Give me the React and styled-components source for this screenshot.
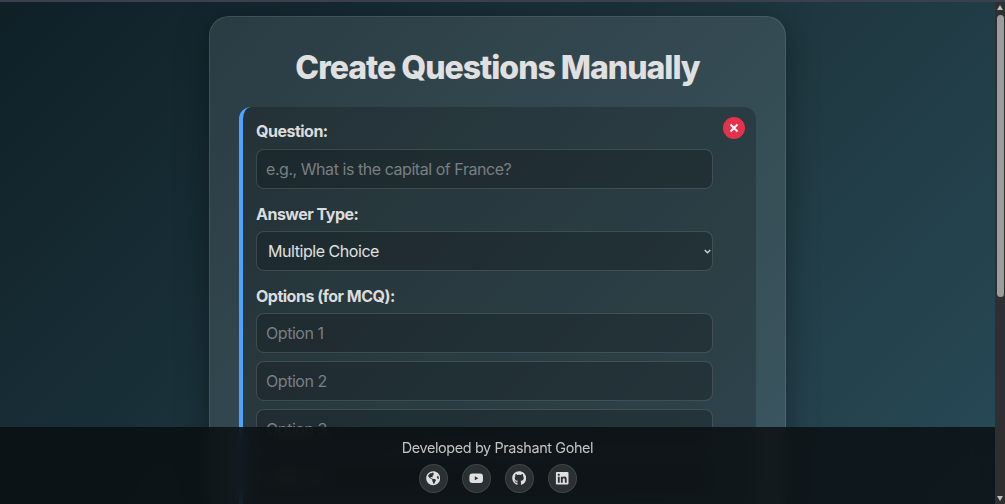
import React from "react";
import styled, { createGlobalStyle } from "styled-components";
import { FaGlobeAmericas, FaYoutube, FaGithub, FaLinkedin } from "react-icons/fa";

const GlobalStyle = createGlobalStyle`
  html, body {
    margin: 0;
    height: 100%;
    overflow: hidden;
    background: #0f2027;
  }
  * {
    box-sizing: border-box;
  }
`;

const font = `Inter, "Open Sans", sans-serif`;

const TopEdge = styled.div`
  height: 2px;
  background: #3b3f4e;
`;

const Shell = styled.div`
  display: flex;
  height: calc(100vh - 2px);
`;

const Viewport = styled.div`
  position: relative;
  flex: 1;
  overflow: hidden;
  font-family: ${font};
`;

// the browser hides real scrollbars here, so the rail is drawn
const Rail = styled.div`
  width: 10px;
  display: flex;
  flex-direction: column;
  align-items: center;
  padding: 3px 0 3px;
  background: #2f2f31;
`;

const ArrowUp = styled.div`
  width: 0;
  height: 0;
  border-left: 3.5px solid transparent;
  border-right: 3.5px solid transparent;
  border-bottom: 5px solid #bdbdbd;
`;

const ArrowDown = styled(ArrowUp)`
  margin-top: auto;
  border-bottom: none;
  border-top: 5px solid #bdbdbd;
`;

const Thumb = styled.div`
  width: 7px;
  height: 282px;
  margin-top: 5px;
  border-radius: 4px;
  background: #9c9c9c;
`;

const Page = styled.div`
  height: 848px;
  padding-top: 14px;
  background: linear-gradient(135deg, #0f2027, #203a43, #2c5364);
`;

const Panel = styled.main`
  width: 577px;
  height: 820px;
  margin: 0 auto;
  padding: 30px 29px;
  border-radius: 20px;
  border: 1px solid rgba(255, 255, 255, 0.1);
  background: rgba(255, 255, 255, 0.1);
  box-shadow: 0 8px 32px rgba(0, 0, 0, 0.37);
`;

const Title = styled.h1`
  margin: 0 0 18px;
  font-size: 32px;
  line-height: 42px;
  font-weight: 800;
  letter-spacing: -1px;
  text-align: center;
  color: #e0e0e0;
`;

const QuestionCard = styled.section`
  position: relative;
  padding: 14px 43px 14px 13px;
  border-left: 4px solid #4da3ff;
  border-radius: 12px;
  background: rgba(0, 0, 0, 0.2);
`;

const CloseButton = styled.button`
  position: absolute;
  top: 10px;
  right: 11px;
  width: 22px;
  height: 22px;
  padding: 0;
  display: flex;
  align-items: center;
  justify-content: center;
  border: none;
  border-radius: 50%;
  background: #e3324d;
  svg {
    display: block;
  }
`;

const Label = styled.label`
  display: block;
  margin-bottom: 7px;
  font-size: 16px;
  line-height: 21px;
  font-weight: 700;
  letter-spacing: -0.5px;
  color: #dcdcdc;
`;

const Field = styled.div`
  margin-bottom: 14px;
  & + & ${Label} {
    padding-top: 1px;
    margin-bottom: 6px;
  }
`;

const TextInput = styled.input`
  display: block;
  width: 100%;
  height: 40px;
  margin-bottom: ${(p) => p.$gap || 0}px;
  padding: 0 9px;
  font-family: ${font};
  font-size: 16px;
  letter-spacing: -0.45px;
  color: #e0e0e0;
  border: 1px solid rgba(255, 255, 255, 0.14);
  border-radius: 8px;
  background: rgba(0, 0, 0, 0.2);
  &::placeholder {
    color: #787f82;
    opacity: 1;
  }
`;

const SelectWrap = styled.div`
  position: relative;
`;

const Select = styled.select`
  display: block;
  width: 100%;
  height: 40px;
  padding: 0 11px;
  appearance: none;
  font-family: ${font};
  font-size: 16px;
  letter-spacing: -0.45px;
  color: #e0e0e0;
  border: 1px solid rgba(255, 255, 255, 0.14);
  border-radius: 8px;
  background: rgba(0, 0, 0, 0.2);
`;

const Chevron = styled.svg`
  position: absolute;
  top: 18px;
  right: 2px;
  pointer-events: none;
`;

const Footer = styled.footer`
  position: absolute;
  left: 0;
  right: 0;
  bottom: 0;
  height: 77px;
  padding-top: 11px;
  background: rgba(10, 14, 16, 0.82);
  backdrop-filter: blur(8px);
  text-align: center;
`;

const Credit = styled.p`
  margin: 0 0 6px;
  font-size: 14.4px;
  line-height: 20px;
  letter-spacing: -0.37px;
  color: #c4c4c4;
`;

const Socials = styled.div`
  display: flex;
  justify-content: center;
  gap: 14px;
`;

const Social = styled.a`
  width: 29px;
  height: 29px;
  display: flex;
  align-items: center;
  justify-content: center;
  border-radius: 50%;
  border: 1px solid rgba(255, 255, 255, 0.1);
  background: rgba(255, 255, 255, 0.12);
  color: #e0e0e0;
  font-size: 14.4px;
`;

export default function App() {
  return (
    <>
      <GlobalStyle />
      <TopEdge />
      <Shell>
        <Viewport>
          <Page>
            <Panel>
              <Title>Create Questions Manually</Title>
              <QuestionCard>
                <CloseButton aria-label="Remove question">
                  <svg width="10" height="10" viewBox="0 0 10 10">
                    <path d="M1.5 1.5 L8.5 8.5 M8.5 1.5 L1.5 8.5" stroke="#fff" strokeWidth="2" />
                  </svg>
                </CloseButton>
                <Field>
                  <Label>Question:</Label>
                  <TextInput placeholder="e.g., What is the capital of France?" />
                </Field>
                <Field>
                  <Label>Answer Type:</Label>
                  <SelectWrap>
                    <Select defaultValue="mcq">
                      <option value="mcq">Multiple Choice</option>
                      <option value="text">Text Answer</option>
                    </Select>
                    <Chevron width="7" height="5" viewBox="0 0 7 5">
                      <path d="M0.7 1 L3.5 3.8 L6.3 1" fill="none" stroke="#cfcfcf" strokeWidth="1.4" />
                    </Chevron>
                  </SelectWrap>
                </Field>
                <Field>
                  <Label>Options (for MCQ):</Label>
                  <TextInput $gap={8} placeholder="Option 1" />
                  <TextInput $gap={8} placeholder="Option 2" />
                  <TextInput $gap={8} placeholder="Option 3" />
                  <TextInput $gap={8} placeholder="Option 4" />
                </Field>
              </QuestionCard>
            </Panel>
          </Page>
          <Footer>
            <Credit>Developed by Prashant Gohel</Credit>
            <Socials>
              <Social><FaGlobeAmericas /></Social>
              <Social><FaYoutube /></Social>
              <Social><FaGithub /></Social>
              <Social><FaLinkedin /></Social>
            </Socials>
          </Footer>
        </Viewport>
        <Rail>
          <ArrowUp />
          <Thumb />
          <ArrowDown />
        </Rail>
      </Shell>
    </>
  );
}
